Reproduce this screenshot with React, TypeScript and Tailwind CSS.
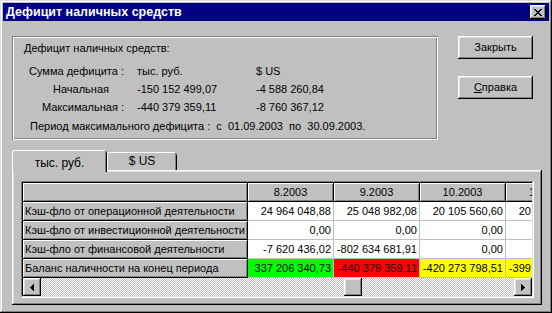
import React from "react";

const raised =
  "shadow-[inset_-1px_-1px_#000000,inset_1px_1px_#ffffff,inset_-2px_-2px_#808080,inset_2px_2px_#dfdfdf]";

const columns = ["8.2003", "9.2003", "10.2003", "11.2003"];

const rows = [
  {
    label: "Кэш-фло от операционной деятельности",
    values: ["24 964 048,88", "25 048 982,08", "20 105 560,60", "20 512 377,45"],
    colors: ["bg-white", "bg-white", "bg-white", "bg-white"],
  },
  {
    label: "Кэш-фло от инвестиционной деятельности",
    values: ["0,00", "0,00", "0,00", "0,00"],
    colors: ["bg-white", "bg-white", "bg-white", "bg-white"],
  },
  {
    label: "Кэш-фло от финансовой деятельности",
    values: ["-7 620 436,02", "-802 634 681,91", "0,00", "0,00"],
    colors: ["bg-white", "bg-white", "bg-white", "bg-white"],
  },
  {
    label: "Баланс наличности на конец периода",
    values: ["337 206 340,73", "-440 379 359,11", "-420 273 798,51", "-399 768 421,06"],
    colors: ["bg-[#00ff00]", "bg-[#ff0000]", "bg-[#ffff00]", "bg-[#ffff00]"],
  },
];

function CloseGlyph() {
  const px = [
    [0, 0], [1, 0], [6, 0], [7, 0],
    [1, 1], [2, 1], [5, 1], [6, 1],
    [2, 2], [3, 2], [4, 2], [5, 2],
    [3, 3], [4, 3],
    [2, 4], [3, 4], [4, 4], [5, 4],
    [1, 5], [2, 5], [5, 5], [6, 5],
    [0, 6], [1, 6], [6, 6], [7, 6],
  ];
  return (
    <svg width="8" height="7" viewBox="0 0 8 7" shapeRendering="crispEdges">
      {px.map(([x, y]) => (
        <rect key={`${x}-${y}`} x={x} y={y} width="1" height="1" fill="#000" />
      ))}
    </svg>
  );
}

function Arrow({ dir }: { dir: "left" | "right" }) {
  const d =
    dir === "left"
      ? "M3 0h1v7h-1zM2 1h1v5h-1zM1 2h1v3h-1zM0 3h1v1h-1z"
      : "M0 0h1v7h-1zM1 1h1v5h-1zM2 2h1v3h-1zM3 3h1v1h-1z";
  return (
    <svg width="4" height="7" viewBox="0 0 4 7" shapeRendering="crispEdges">
      <path d={d} fill="#000" />
    </svg>
  );
}

export default function App() {
  return (
    <div className="flex h-[313px] w-[552px] flex-col bg-[#c0c0c0] p-[3px] font-['Liberation_Sans',Arial,sans-serif] text-black shadow-[inset_-1px_-1px_#000000,inset_1px_1px_#dfdfdf,inset_-2px_-2px_#808080,inset_2px_2px_#ffffff]">
      {/* title bar */}
      <div className="flex h-[18px] items-center justify-between bg-[#000080] pl-[3px] pr-[3px]">
        <span className="text-[12.5px] font-bold leading-none text-white">Дефицит наличных средств</span>
        <button className={`flex h-[14px] w-[16px] items-center justify-center bg-[#c0c0c0] ${raised}`}>
          <CloseGlyph />
        </button>
      </div>

      <div className="flex flex-col pl-[9px]">
        <div className="mt-[15px] flex items-start">
          <div className="flex h-[104px] w-[426px] flex-col text-[11px] leading-none shadow-[inset_1px_1px_#808080,inset_-1px_-1px_#ffffff,inset_2px_2px_#ffffff,inset_-2px_-2px_#808080]">
            <p className="ml-[12px] mt-[7px] h-[12px]">Дефицит наличных средств:</p>
            <div className="mt-[11px] grid grid-cols-[112px_132px_1fr] gap-y-[7px]">
              <span className="text-right">Сумма дефицита :</span>
              <span className="pl-[13px]">тыс. руб.</span>
              <span>$ US</span>
              <span className="pr-[15px] text-right">Начальная</span>
              <span className="pl-[13px]">-150 152 499,07</span>
              <span>-4 588 260,84</span>
              <span className="text-right">Максимальная :</span>
              <span className="pl-[13px]">-440 379 359,11</span>
              <span>-8 760 367,12</span>
            </div>
            <p className="ml-[18px] mt-[8px] whitespace-pre">
              Период максимального дефицита :  с  01.09.2003  по  30.09.2003.
            </p>
          </div>

          <div className="ml-[20px] flex w-[75px] flex-col gap-[17px] text-[11px]">
            <button className={`h-[23px] bg-[#c0c0c0] ${raised}`}>Закрыть</button>
            <button className={`h-[23px] bg-[#c0c0c0] ${raised}`}>
              <span className="underline">С</span>правка
            </button>
          </div>
        </div>

        {/* tabs */}
        <div className="mt-[10px] flex items-end text-[12px]">
          <div className="relative z-10 -mb-[2px] flex h-[22px] w-[95px] items-start justify-center rounded-t-[3px] bg-[#c0c0c0] pt-[4px] shadow-[inset_1px_0_#ffffff,inset_0_1px_#ffffff,inset_-1px_0_#000000,inset_-2px_0_#808080]">
            тыс. руб.
          </div>
          <div className="flex h-[18px] w-[70px] items-center justify-center rounded-t-[3px] shadow-[inset_1px_0_#ffffff,inset_0_1px_#ffffff,inset_-1px_0_#000000,inset_-2px_0_#808080]">
            $ US
          </div>
        </div>

        {/* panel */}
        <div className="h-[135px] w-[530px] pl-[9px] pt-[11px] shadow-[inset_-1px_-1px_#000000,inset_1px_1px_#ffffff,inset_-2px_-2px_#808080,inset_2px_2px_#dfdfdf]">
          <div className="h-[117px] w-[513px] p-[2px] shadow-[inset_-1px_-1px_#ffffff,inset_1px_1px_#808080,inset_-2px_-2px_#dfdfdf,inset_2px_2px_#000000]">
            <div className="w-[509px] overflow-hidden text-[11px] leading-[18px]">
              <div className="flex w-max">
                <div className="h-[19px] w-[225px] shrink-0 border-b border-r border-black bg-[#c0c0c0] shadow-[inset_1px_1px_#ffffff,inset_-1px_-1px_#808080]" />
                {columns.map((c) => (
                  <div
                    key={c}
                    className="h-[19px] w-[86px] shrink-0 border-b border-r border-black bg-[#c0c0c0] text-center shadow-[inset_1px_1px_#ffffff,inset_-1px_-1px_#808080]"
                  >
                    {c}
                  </div>
                ))}
              </div>
              {rows.map((r) => (
                <div key={r.label} className="flex w-max">
                  <div className="h-[19px] w-[225px] shrink-0 whitespace-nowrap border-b border-r border-black bg-[#c0c0c0] pl-[2px] shadow-[inset_1px_1px_#ffffff,inset_-1px_-1px_#808080]">
                    {r.label}
                  </div>
                  {r.values.map((v, i) => (
                    <div
                      key={i}
                      className={`h-[19px] w-[86px] shrink-0 whitespace-nowrap border-b border-r border-[#c0c0c0] pr-[2px] text-right ${r.colors[i]}`}
                    >
                      {v}
                    </div>
                  ))}
                </div>
              ))}
            </div>
            {/* horizontal scrollbar */}
            <div className="flex h-[18px] w-[509px]">
              <div className={`flex h-[18px] w-[18px] shrink-0 items-center justify-center bg-[#c0c0c0] ${raised}`}>
                <Arrow dir="left" />
              </div>
              <div className="flex-1 bg-[repeating-conic-gradient(#ffffff_0%_25%,#c0c0c0_0%_50%)] bg-size-[2px_2px]">
                <div className={`ml-[303px] h-[18px] w-[18px] bg-[#c0c0c0] ${raised}`} />
              </div>
              <div className={`flex h-[18px] w-[18px] shrink-0 items-center justify-center bg-[#c0c0c0] ${raised}`}>
                <Arrow dir="right" />
              </div>
            </div>
          </div>
        </div>
      </div>
    </div>
  );
}
